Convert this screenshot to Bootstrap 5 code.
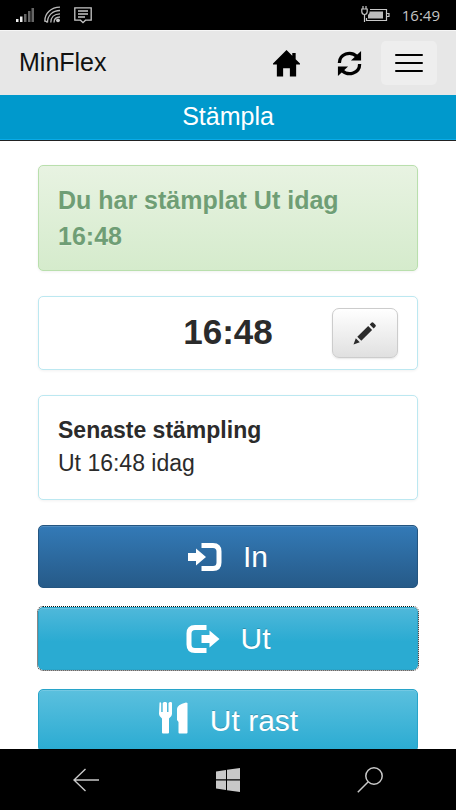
<!DOCTYPE html>
<html lang="sv">
<head>
<meta charset="utf-8">
<meta name="viewport" content="width=device-width, initial-scale=1">
<title>MinFlex</title>
<link rel="stylesheet" href="https://cdn.jsdelivr.net/npm/bootstrap@5.3.0/dist/css/bootstrap.min.css">
<style>
  body { font-family: "Liberation Sans", Arial, sans-serif; color: #2b2b2b; background: #fff; }
  svg { display: block; flex: none; }
  .status-strip { background: #000; color: #c4c4c4; padding: 0 16px; min-height: 30px; font: 15px/30px "Open Sans", sans-serif; }
  .app-nav { background: #e7e7e7; border-top: 1px solid #f6f6f6; padding: 0 19px; min-height: 65px; }
  .app-nav .navbar-brand { font-size: 25px; line-height: 32px; color: #111; margin: 0; padding: 0 0 2px; }
  .nav-actions { gap: 36px; }
  .nav-icon { color: #000; padding: 0; border: 0; }
  .menu-toggle { background: #eee; border: 0; border-radius: 5px; padding: 11px 14px; color: #000; margin-left: -18px; }
  .page-title { background: #09c; color: #fff; border-bottom: 1px solid #222; font-size: 25px; line-height: 36px; padding: 3px 0 6px; margin: 0; font-weight: 400; box-shadow: inset 0 -1px #09abe8; }
  .content { min-height: 0; padding: 24px 38px 0; }
  .panel-box { border: 1px solid #bce8f1; border-radius: 5px; box-shadow: 0 1px 3px rgba(0,0,0,.06); margin-bottom: 25px; background: #fff; padding: 19px; }
  .stamp-alert { border-color: #b9dfad; background: linear-gradient(#e8f3e2, #d5ebcc); color: #6f9e75; font-size: 25px; line-height: 36px; font-weight: 700; padding: 16px 19px; text-shadow: 0 1px 0 rgba(255,255,255,.3); }
  .clock-box { display: grid; grid-template-columns: 66px 1fr 66px; align-items: center; padding: 11px 19px; }
  .clock { font-size: 35px; line-height: 40px; font-weight: 700; text-align: center; padding-bottom: 2px; }
  .edit-btn { border: 1px solid #ccc; border-radius: 7px; background: linear-gradient(#fff, #e0e0e0); padding: 11px 19px; color: #2b2b2b; box-shadow: 0 1px 2px rgba(0,0,0,.1); }
  .latest { font-size: 23px; line-height: 33px; padding-top: 18px; }
  .stamp-btn { font-size: 30px; line-height: 41px; padding: 10px; color: #fff; border-radius: 5px; gap: 20px; text-shadow: 0 -1px 0 rgba(0,0,0,.2); box-shadow: inset 0 1px 0 rgba(255,255,255,.15); border: 1px solid #28a4c9; background: linear-gradient(#5bc0de, #2aabd2); margin-bottom: 19px; }
  .stamp-btn:hover { color: #fff; }
  .stamp-in { border-color: #245580; background: linear-gradient(#337ab7, #265a88); }
  .stamp-active { background: linear-gradient(#4fb8da, #2aabd2 55%); outline: 1px dotted #111; }
  .system-bar { background: #000; color: #c8c8c8; min-height: 61px; padding: 0 16%; }
  .system-bar .btn { color: inherit; padding: 0; border: 0; }
</style>
<script src="https://cdn.jsdelivr.net/npm/bootstrap@5.3.0/dist/js/bootstrap.bundle.min.js" defer></script>
</head>
<body class="vh-100 d-flex flex-column overflow-hidden">
  <div class="status-strip d-flex align-items-center flex-shrink-0">
    <svg width="18" height="14" viewBox="0 0 18 14" fill="#666" aria-hidden="true"><path fill="#eee" d="M0 11h2.500v3H0zM4 8.500h2.500v5.500H4z"/><path d="M8 6h2.500v8H8zM12 3h2.500v11H12zM15.500 0H18v14h-2.500z"/></svg>
    <svg class="ms-2 me-2" width="20" height="18" viewBox="-2 0 20 18" fill="none" stroke="#bbb" stroke-width="1.300" aria-hidden="true"><path d="M3.500 16.500C2.200 15 .8 15 .8 15C.8 7.500 7 1.200 16 1.200M3.500 16.500C3.500 9.500 8.500 4.500 16 4.500M6.800 16.500C6.800 11.500 10 7.800 16 7.800M10 16.500C10 13 12 11 16 11"/><circle cx="14" cy="14.300" r="1.900" fill="#ccc" stroke="none"/></svg>
    <svg class="ms-1" width="18" height="18" viewBox="0 0 18 18" fill="none" stroke="#c8c8c8" stroke-width="1.300" aria-hidden="true"><path d="M.8 1.800h16.400v12.400h-5.700L9 16.700l-2.500-2.500H.8zM4 5h10M4 8h10M4 11h7"/></svg>
    <svg class="ms-auto" width="29" height="18" viewBox="0 0 29 18" fill="none" stroke="#c8c8c8" stroke-width="1.200" aria-hidden="true"><path d="M9 3.500h16.500v11H5.500V12M26 7.500h2v3h-2M3.500 16V8.500M2 0v3M5 0v3M.8 3h5.400v2.500c0 4-5.400 4-5.400 0z"/><path d="M8.500 5.500H22v7H7V9l1.500-2z" fill="#bbb" stroke="none"/></svg>
    <span class="ms-2 ps-1">16:49</span>
  </div>

  <nav class="app-nav navbar flex-nowrap flex-shrink-0">
    <a class="navbar-brand" href="#">MinFlex</a>
    <div class="nav-actions d-flex align-items-center">
      <a class="nav-icon" href="#" aria-label="Hem"><svg width="27" height="27" viewBox="0 0 28 28" fill="currentColor"><path d="M14 0l6 6V3h3.500v6.500L28 14v1h-4v12.500h-6.500V19h-7v8.500H4V15H0v-1z"/></svg></a>
      <button class="nav-icon btn" type="button" aria-label="Uppdatera"><svg width="27" height="27" viewBox="0 0 28 28" fill="none" stroke="currentColor" stroke-width="3.400"><path d="M3.500 13.500C3.500 4 15 .5 21.500 6.500M24.500 14.500C24.500 24 13 27.500 6.500 21.500"/><path d="M26 1v10H15.500zM2 27V17h10.500z" fill="currentColor" stroke="none"/></svg></button>
      <button class="menu-toggle btn" type="button" aria-label="Meny"><svg width="28" height="22" viewBox="0 0 28 22" stroke="currentColor" stroke-width="2" stroke-linecap="round"><path d="M1 3h26M1 11h26M1 19h26"/></svg></button>
    </div>
  </nav>

  <h1 class="page-title text-center flex-shrink-0">Stämpla</h1>

  <main class="content flex-grow-1 overflow-hidden">
    <div class="panel-box stamp-alert" role="status">Du har stämplat Ut idag 16:48</div>
    <section class="panel-box clock-box">
      <div class="clock" style="grid-column: 2">16:48</div>
      <button class="edit-btn btn" type="button" aria-label="Ändra tid"><svg width="26" height="26" viewBox="0 0 26 26" fill="currentColor"><path d="M1.500 24.500l2.300-6.200 4 4zM5.300 16.800L16.200 6l3.900 3.900L9.300 20.800zM17.700 4.500l1.700-1.700q1-1 2 0l2 2q1 1 0 2l-1.800 1.700z"/></svg></button>
    </section>
    <section class="panel-box latest">
      <strong class="d-block">Senaste stämpling</strong>
      <div>Ut 16:48 idag</div>
    </section>
    <button class="stamp-btn stamp-in btn w-100 d-flex justify-content-center align-items-center" type="button">
      <svg width="35" height="30" viewBox="0 0 35 30" fill="currentColor" aria-hidden="true"><path d="M0 11h8V6.500L18 15 8 23.500V19H0z"/><path d="M13.500 3.500H25q6 0 6 6v11q0 6-6 6H13.500" fill="none" stroke="currentColor" stroke-width="5"/></svg>
      <span>In</span>
    </button>
    <button class="stamp-btn stamp-active btn w-100 d-flex justify-content-center align-items-center" type="button">
      <svg width="35" height="30" viewBox="0 0 35 30" fill="currentColor" aria-hidden="true"><path d="M15.500 11h8V6.500L33.500 15l-10 8.500V19h-8z"/><path d="M20.500 3.500H9q-6 0-6 6v11q0 6 6 6h11.500" fill="none" stroke="currentColor" stroke-width="5"/></svg>
      <span>Ut</span>
    </button>
    <button class="stamp-btn btn w-100 d-flex justify-content-center align-items-center" type="button">
      <svg width="32" height="41" viewBox="0 1 32 41" fill="currentColor" aria-hidden="true"><path d="M2 3l1.200 1v9h1.500V4L6 3h2l1 1v9h1.500V4l1.300-1h1.500L14 4v11q0 2.500-3 4.500v14q0 1-1 1H5q-1 0-1-1v-14q-3-2-3-4.500L1.500 4zM29.500 4v29.500q0 1-1 1h-7q-1 0-1-1V23L19 21V10q0-4.500 9-6.500z"/></svg>
      <span>Ut rast</span>
    </button>
  </main>

  <footer class="system-bar d-flex justify-content-between align-items-center flex-shrink-0">
    <button class="btn" type="button" aria-label="Tillbaka"><svg width="26" height="24" viewBox="0 0 26 24" fill="none" stroke="currentColor" stroke-width="1.400"><path d="M12.500 1L1 12l11.500 11M1 12h25"/></svg></button>
    <button class="btn" type="button" aria-label="Start"><svg width="24" height="24" viewBox="0 0 24 24" fill="currentColor"><path d="M0 3.500L10 2v9.300H0zM11 1.800L24 0v11.300H11zM0 12.500h10V22L0 20.500zM11 12.500h13V24l-13-1.800z"/></svg></button>
    <button class="btn" type="button" aria-label="Sök"><svg width="26" height="26" viewBox="0 0 26 26" fill="none" stroke="currentColor" stroke-width="1.500"><circle cx="17" cy="9" r="8.200"/><path d="M11 15L.8 25.200"/></svg></button>
  </footer>
</body>
</html>
